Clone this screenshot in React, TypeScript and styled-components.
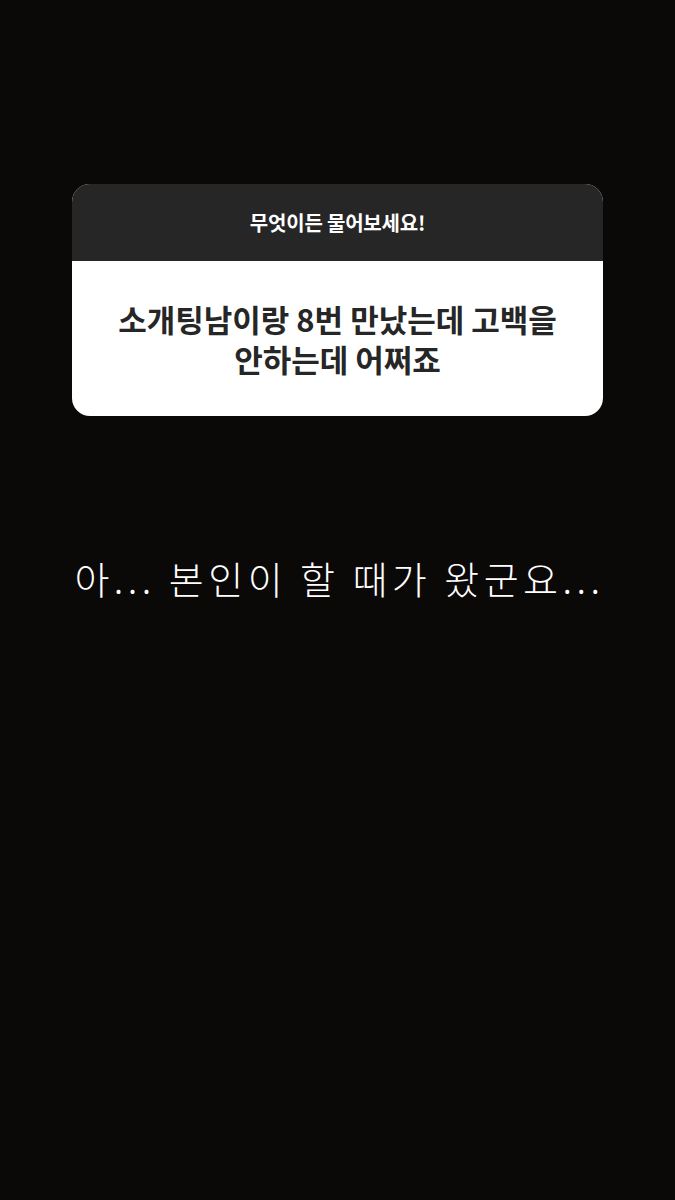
import React from "react";
import styled, { createGlobalStyle } from "styled-components";

const Global = createGlobalStyle`
  html, body { margin: 0; padding: 0; background: #0b0808; }
  body { font-family: "Noto Sans CJK KR", "Noto Sans", sans-serif; }
`;

const Screen = styled.div`
  width: 675px;
  height: 1200px;
  background: #0b0808;
  display: flex;
  flex-direction: column;
  align-items: center;
  padding-top: 184px;
  box-sizing: border-box;
`;

const Card = styled.div`
  width: 531px;
  border-radius: 18px;
  overflow: hidden;
  background: #ffffff;
  display: flex;
  flex-direction: column;
`;

const CardHeader = styled.div`
  height: 77px;
  background: #262626;
  color: #ffffff;
  display: flex;
  align-items: center;
  justify-content: center;
  font-size: 20px;
  font-weight: 700;
  letter-spacing: -0.2px;
`;

const Question = styled.div`
  height: 155px;
  display: flex;
  flex-direction: column;
  align-items: center;
  justify-content: center;
  text-align: center;
  color: #262626;
  font-size: 31px;
  font-weight: 700;
  padding: 0 20px;
  box-sizing: border-box;
`;

const QuestionLine = styled.div`
  height: 40px;
  line-height: 40px;
  white-space: nowrap;
`;

const Answer = styled.div`
  margin-top: 137px;
  padding-left: 4px;
  color: #ffffff;
  font-size: 38px;
  font-weight: 300;
  letter-spacing: 4.5px;
  line-height: 50px;
  text-align: center;
`;

export default function App() {
  return (
    <>
      <Global />
      <Screen>
        <Card>
          <CardHeader>무엇이든 물어보세요!</CardHeader>
          <Question>
            <QuestionLine>소개팅남이랑 8번 만났는데 고백을</QuestionLine>
            <QuestionLine>안하는데 어쩌죠</QuestionLine>
          </Question>
        </Card>
        <Answer>아... 본인이 할 때가 왔군요...</Answer>
      </Screen>
    </>
  );
}
